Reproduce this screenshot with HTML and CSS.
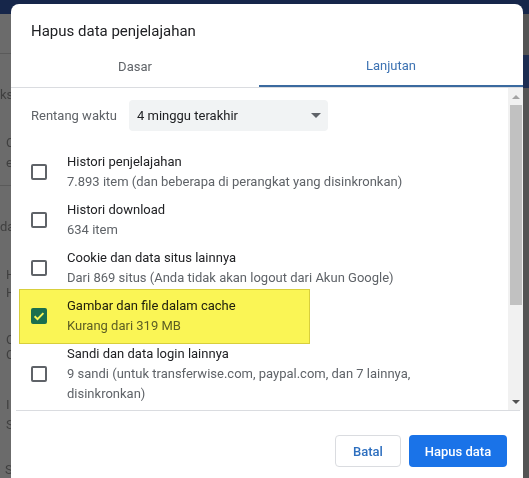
FILE: index.html
```html
<!DOCTYPE html>
<html lang="id">
<head>
<meta charset="utf-8">
<title>Hapus data penjelajahan</title>
<link rel="stylesheet" href="styles.css">
</head>
<body>
<div class="page">
  <div class="page-header"></div>
  <div class="page-main">
    <div class="page-side">
      <div class="frag rule r1"></div>
      <div class="frag f-ks">ks</div>
      <div class="frag f-c1">C</div>
      <div class="frag f-e">e</div>
      <div class="frag rule r2"></div>
      <div class="frag f-da">da</div>
      <div class="frag f-h1">H</div>
      <div class="frag f-h2">H</div>
      <div class="frag f-c2">C</div>
      <div class="frag f-c3">C</div>
      <div class="frag f-i">I</div>
      <div class="frag f-s1">S</div>
      <div class="frag f-s2">S</div>
    </div>
    <div class="page-center"></div>
    <div class="page-edge">
      <div class="edge-btn"></div>
    </div>
  </div>
</div>

<div class="dialog" role="dialog">
  <div class="dialog-title">Hapus data penjelajahan</div>
  <div class="tabs">
    <div class="tab tab-basic">Dasar</div>
    <div class="tab tab-active">Lanjutan</div>
  </div>

  <div class="dialog-body">
    <div class="scroll-content">
      <div class="time-row">
        <span class="time-label">Rentang waktu</span>
        <div class="select">
          <span>4 minggu terakhir</span>
          <svg class="select-arrow" width="10" height="5" viewBox="0 0 10 5"><path d="M0 0h10L5 5z" fill="#5f6368"/></svg>
        </div>
      </div>

      <div class="option">
        <span class="checkbox"></span>
        <div class="option-text">
          <div class="option-title">Histori penjelajahan</div>
          <div class="option-sub">7.893 item (dan beberapa di perangkat yang disinkronkan)</div>
        </div>
      </div>

      <div class="option">
        <span class="checkbox"></span>
        <div class="option-text">
          <div class="option-title">Histori download</div>
          <div class="option-sub">634 item</div>
        </div>
      </div>

      <div class="option">
        <span class="checkbox"></span>
        <div class="option-text">
          <div class="option-title">Cookie dan data situs lainnya</div>
          <div class="option-sub">Dari 869 situs (Anda tidak akan logout dari Akun Google)</div>
        </div>
      </div>

      <div class="option marked">
        <span class="checkbox checked">
          <svg width="16" height="16" viewBox="0 0 16 16"><path d="M3.6 8.3l2.9 2.8 5.9-6" fill="none" stroke="#fff" stroke-width="2"/></svg>
        </span>
        <div class="option-text">
          <div class="option-title">Gambar dan file dalam cache</div>
          <div class="option-sub">Kurang dari 319 MB</div>
        </div>
        <span class="highlight"></span>
      </div>

      <div class="option">
        <span class="checkbox"></span>
        <div class="option-text">
          <div class="option-title">Sandi dan data login lainnya</div>
          <div class="option-sub">9 sandi (untuk transferwise.com, paypal.com, dan 7 lainnya, disinkronkan)</div>
        </div>
      </div>
    </div>

    <div class="scrollbar">
      <div class="sb-btn sb-up"><svg width="8" height="4" viewBox="0 0 8 4"><path d="M0 4h8L4 0z" fill="#a3a3a3"/></svg></div>
      <div class="sb-track"><div class="sb-thumb"></div></div>
      <div class="sb-btn sb-down"><svg width="8" height="4" viewBox="0 0 8 4"><path d="M0 0h8L4 4z" fill="#505050"/></svg></div>
    </div>
  </div>

  <div class="dialog-divider"></div>

  <div class="dialog-footer">
    <button class="btn btn-cancel">Batal</button>
    <button class="btn btn-primary">Hapus data</button>
  </div>
</div>
</body>
</html>
```

FILE: styles.css
```css
* {
  box-sizing: border-box;
}

html,
body {
  margin: 0;
  width: 529px;
  height: 478px;
  overflow: hidden;
}

body {
  background: #5e5e5e;
  font-family: Roboto, "Liberation Sans", sans-serif;
}

/* dimmed page behind the modal */
.page {
  height: 478px;
  display: flex;
  flex-direction: column;
}

.page-header {
  height: 14px;
  background: #16264a;
  flex: none;
}

.page-main {
  flex: 1;
  display: flex;
}

.page-side {
  width: 11px;
  background: #6b6b6b;
  overflow: hidden;
  display: flex;
  flex-direction: column;
  align-items: flex-end;
}

.page-center {
  flex: 1;
}

.page-edge {
  width: 6px;
  background: #545454;
  padding-top: 41px;
}

.edge-btn {
  height: 33px;
  background: #1d2d52;
}

.frag {
  width: 11px;
  height: 14px;
  line-height: 14px;
  font-size: 13px;
  color: #3f3f3f;
  white-space: nowrap;
  padding-left: 6px;
  flex: none;
}

.rule {
  border-bottom: 1px solid #5a5a5a;
  padding: 0;
}

.r1 { height: 40px; margin-top: 0; }
.f-ks { margin-top: 34px; padding-left: 0; }
.f-c1 { margin-top: 34px; }
.f-e { margin-top: 6px; }
.r2 { height: 16px; }
.f-da { margin-top: 34px; padding-left: 0; }
.f-h1 { margin-top: 34px; }
.f-h2 { margin-top: 4px; }
.f-c2 { margin-top: 33px; }
.f-c3 { margin-top: 1px; }
.f-i { margin-top: 36px; }
.f-s1 { margin-top: 6px; }
.f-s2 { margin-top: 31px; padding-left: 5px; }

/* modal dialog */
.dialog {
  position: absolute;
  left: 11px;
  top: 4px;
  width: 512px;
  height: 490px;
  background: #fff;
  border-radius: 8px 8px 0 0;
  display: flex;
  flex-direction: column;
}

.dialog-title {
  height: 42px;
  padding: 16px 20px 0;
  font-size: 15px;
  line-height: 22px;
  color: #202124;
}

.tabs {
  display: flex;
  height: 42px;
  border-bottom: 1px solid #dadce0;
  flex: none;
}

.tab {
  display: flex;
  align-items: center;
  justify-content: center;
  font-size: 13px;
  color: #5f6368;
  padding-bottom: 1px;
}

.tab-basic {
  width: 248px;
}

.tab-active {
  flex: 1;
  color: #3c72b2;
  border-bottom: 2px solid #3a6a9f;
  padding-bottom: 0;
}

.dialog-body {
  height: 322px;
  display: flex;
  flex: none;
}

.scroll-content {
  flex: 1;
  overflow: hidden;
  padding: 12px 0 0 20px;
}

.time-row {
  display: flex;
  align-items: center;
  gap: 12px;
  height: 31px;
  margin-bottom: 21px;
  font-size: 13px;
}

.time-label {
  color: #5f6368;
  width: 86px;
}

.select {
  width: 199px;
  height: 31px;
  background: #f1f3f4;
  border-radius: 4px;
  display: flex;
  align-items: center;
  justify-content: space-between;
  padding: 0 7px 0 8px;
  color: #202124;
}

.option {
  position: relative;
  display: flex;
  align-items: center;
  gap: 20px;
  margin-bottom: 8px;
  font-size: 13px;
  line-height: 20px;
}

.checkbox {
  width: 16px;
  height: 16px;
  border: 2px solid #5f6368;
  border-radius: 2px;
  flex: none;
  display: flex;
  align-items: center;
  justify-content: center;
}

.checkbox.checked {
  background: #1a73e8;
  border-color: #1a73e8;
}

.checkbox svg {
  flex: none;
}

.option-text {
  max-width: 400px;
}

.option-title {
  color: #202124;
}

.option-sub {
  color: #5f6368;
}

/* highlighter mark laid over the cache row */
.highlight {
  position: absolute;
  left: -12px;
  top: -7px;
  width: 291px;
  height: 55px;
  background: #faf555;
  border: 1px solid #d8cf3c;
  mix-blend-mode: multiply;
  pointer-events: none;
}

.scrollbar {
  width: 15px;
  background: #f1f1f1;
  display: flex;
  flex-direction: column;
  flex: none;
}

.sb-btn {
  height: 17px;
  display: flex;
  align-items: center;
  justify-content: center;
  flex: none;
}

.sb-track {
  flex: 1;
  padding: 0 1px 0 2px;
}

.sb-thumb {
  height: 200px;
  background: #c1c1c1;
}

.dialog-divider {
  height: 1px;
  background: #dadce0;
  margin: 0 3px 0 5px;
  flex: none;
}

.dialog-footer {
  display: flex;
  justify-content: flex-end;
  gap: 8px;
  padding: 24px 16px 0;
}

.btn {
  height: 32px;
  border-radius: 4px;
  font-family: Roboto, "Liberation Sans", sans-serif;
  font-size: 13px;
  font-weight: 500;
  padding: 0;
  cursor: pointer;
}

.btn-cancel {
  width: 66px;
  background: #fff;
  border: 1px solid #dadce0;
  color: #2d6fbf;
}

.btn-primary {
  width: 98px;
  background: #1a73e8;
  border: none;
  color: #fff;
}
```
